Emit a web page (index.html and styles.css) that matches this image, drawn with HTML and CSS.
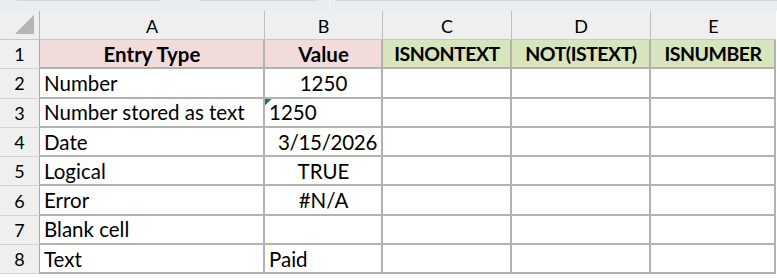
FILE: index.html
```html
<!DOCTYPE html>
<html>
<head>
<meta charset="utf-8">
<link rel="stylesheet" href="styles.css">
</head>
<body>
<div class="topbar">
  <span class="seg seg1"></span><span class="gap1"></span><span class="seg seg2"></span><span class="gap2"></span><span class="seg seg3"></span>
</div>
<div class="sheet">
  <div class="corner"><span class="tri"></span></div>
  <div class="colhead">A</div>
  <div class="colhead">B</div>
  <div class="colhead">C</div>
  <div class="colhead">D</div>
  <div class="colhead last">E</div>

  <div class="rowhead">1</div>
  <div class="cell hdr pink">Entry Type</div>
  <div class="cell hdr pink">Value</div>
  <div class="cell hdr green">ISNONTEXT</div>
  <div class="cell hdr green">NOT(ISTEXT)</div>
  <div class="cell hdr green">ISNUMBER</div>

  <div class="rowhead">2</div>
  <div class="cell">Number</div>
  <div class="cell center">1250</div>
  <div class="cell"></div><div class="cell"></div><div class="cell"></div>

  <div class="rowhead">3</div>
  <div class="cell">Number stored as text</div>
  <div class="cell flagged"><span class="flag"></span>1250</div>
  <div class="cell"></div><div class="cell"></div><div class="cell"></div>

  <div class="rowhead">4</div>
  <div class="cell">Date</div>
  <div class="cell right">3/15/2026</div>
  <div class="cell"></div><div class="cell"></div><div class="cell"></div>

  <div class="rowhead">5</div>
  <div class="cell">Logical</div>
  <div class="cell center">TRUE</div>
  <div class="cell"></div><div class="cell"></div><div class="cell"></div>

  <div class="rowhead">6</div>
  <div class="cell">Error</div>
  <div class="cell center">#N/A</div>
  <div class="cell"></div><div class="cell"></div><div class="cell"></div>

  <div class="rowhead">7</div>
  <div class="cell">Blank cell</div>
  <div class="cell"></div>
  <div class="cell"></div><div class="cell"></div><div class="cell"></div>

  <div class="rowhead">8</div>
  <div class="cell">Text</div>
  <div class="cell">Paid</div>
  <div class="cell"></div><div class="cell"></div><div class="cell"></div>
</div>
</body>
</html>
```

FILE: styles.css
```css
* { box-sizing: border-box; }
html, body { margin: 0; padding: 0; background: #ffffff; }
body { font-family: Lato, "Open Sans", sans-serif; color: #000; width: 777px; height: 278px; overflow: hidden; }

.topbar {
  height: 11px;
  background: #e7edf0;
  display: flex;
  align-items: flex-start;
}
.seg { height: 1px; background: #d3d7da; }
.seg1 { margin-left: 17px; width: 143px; }
.gap1 { width: 40px; }
.seg2 { width: 118px; }
.gap2 { width: 12px; height: 11px; border-right: 1px solid #f6f8f9; margin-right: 5px; }
.seg3 { flex: 1; }

.sheet {
  display: grid;
  grid-template-columns: 40px 225px 118px 129px 139px 125px;
  grid-template-rows: 29px repeat(8, 29.3px);
}

.corner, .colhead, .rowhead {
  background: #efefef;
  font-size: 18px;
  display: flex;
  align-items: center;
  justify-content: center;
  color: #000;
}
.corner {
  position: relative;
  border-right: 1px solid #b8b8b8;
  border-bottom: 1px solid #c8c8c8;
}
.tri {
  position: absolute;
  right: 5px;
  bottom: 5px;
  width: 19px;
  height: 19px;
  background: #b5b5b5;
  clip-path: polygon(100% 0, 100% 100%, 0 100%);
}
.colhead {
  border-right: 1px solid #bdbdbd;
  border-bottom: 1px solid #c8c8c8;
  padding-top: 1px;
}
.colhead.last { border-right: none; }
.rowhead {
  border-right: 1px solid #a9a9a9;
  border-bottom: 1px solid #d2d2d2;
}

.cell {
  font-size: 20.5px;
  display: flex;
  align-items: center;
  padding: 0 3px 0 4px;
  white-space: nowrap;
  border-right: 2px solid #b2b2b2;
  border-bottom: 2px solid #b2b2b2;
  position: relative;
}
.cell.center { justify-content: center; }
.cell.right { justify-content: flex-end; padding-right: 4px; letter-spacing: -0.3px; }
.hdr { font-weight: bold; justify-content: center; }
.pink { background: #f2dcdb; }
.green { background: #d8e4bc; font-size: 19.5px; letter-spacing: -0.5px; }

.flag {
  position: absolute;
  left: 0;
  top: 0;
  width: 7px;
  height: 7px;
  background: #1e7b45;
  clip-path: polygon(0 0, 100% 0, 0 100%);
}
```
